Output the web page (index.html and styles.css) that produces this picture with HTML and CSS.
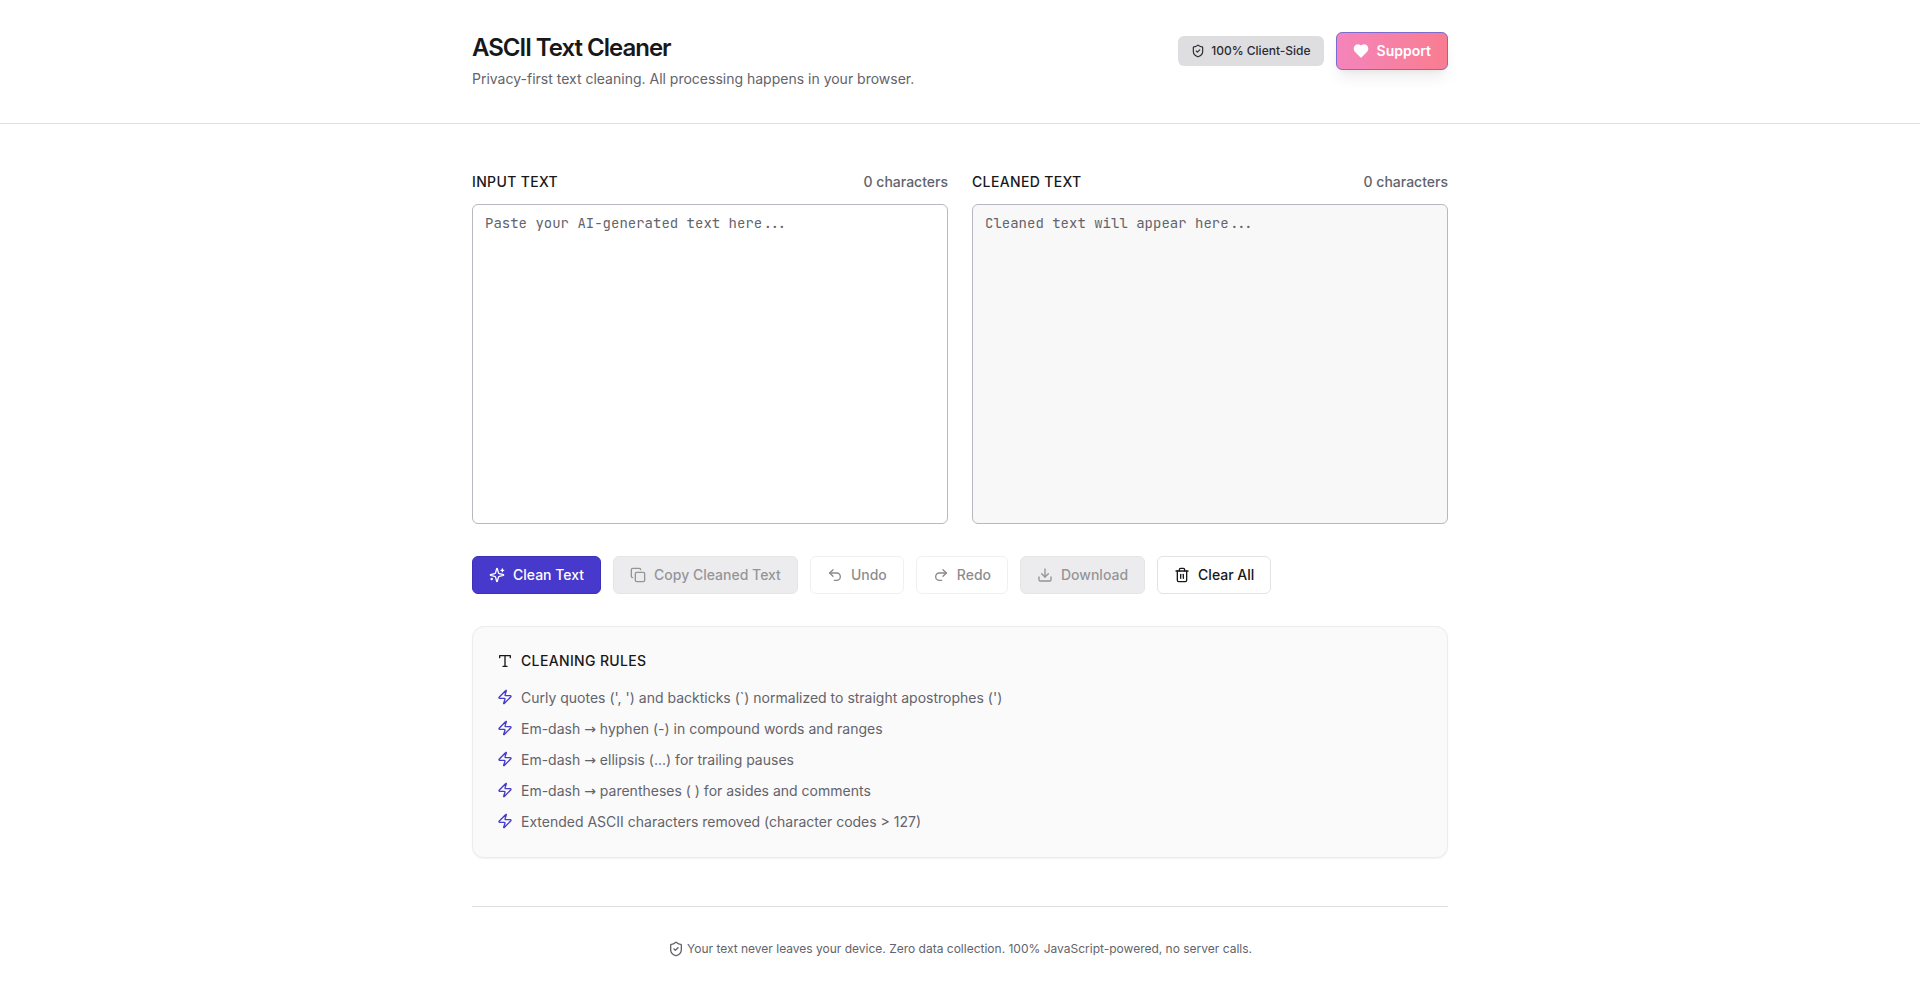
FILE: index.html
```html
<!DOCTYPE html>
<html lang="en">
<head>
    <meta charset="UTF-8">
    <meta name="viewport" content="width=device-width, initial-scale=1.0">
    <title>ASCII Text Cleaner</title>
    <link rel="stylesheet" href="styles.css">
</head>
<body>
    <!-- Shared icons -->
    <svg class="sprite" aria-hidden="true">
        <symbol id="icon-shield" viewBox="0 0 24 24">
            <path d="M20 13c0 5-3.5 7.5-7.66 8.95a1 1 0 0 1-.67-.01C7.5 20.5 4 18 4 13V6a1 1 0 0 1 1-1c2 0 4.5-1.2 6.24-2.72a1.17 1.17 0 0 1 1.52 0C14.51 3.81 17 5 19 5a1 1 0 0 1 1 1z"/>
            <path d="m9 12 2 2 4-4"/>
        </symbol>
        <symbol id="icon-zap" viewBox="0 0 24 24">
            <path d="M4 14a1 1 0 0 1-.78-1.63l9.9-10.2a.5.5 0 0 1 .86.46l-1.92 6.02A1 1 0 0 0 13 10h7a1 1 0 0 1 .78 1.63l-9.9 10.2a.5.5 0 0 1-.86-.46l1.92-6.02A1 1 0 0 0 11 14z"/>
        </symbol>
    </svg>

    <header class="site-header">
        <div class="container header-row">
            <div>
                <h1>ASCII Text Cleaner</h1>
                <p class="tagline">Privacy-first text cleaning. All processing happens in your browser.</p>
            </div>
            <div class="header-actions">
                <div class="badge">
                    <svg class="icon icon-sm"><use href="#icon-shield"/></svg>
                    100% Client-Side
                </div>
                <a class="btn btn-support" href="#support">
                    <svg class="icon icon-fill" viewBox="0 0 24 24"><path d="M19 14c1.49-1.46 3-3.21 3-5.5A5.5 5.5 0 0 0 16.5 3c-1.76 0-3 .5-4.5 2-1.5-1.5-2.74-2-4.5-2A5.5 5.5 0 0 0 2 8.5c0 2.3 1.5 4.05 3 5.5l7 7Z"/></svg>
                    Support
                </a>
            </div>
        </div>
    </header>

    <main class="container main">
        <div class="editors">
            <div class="editor">
                <div class="editor-head">
                    <label for="input-text">INPUT TEXT</label>
                    <span class="count" id="input-count">0 characters</span>
                </div>
                <textarea id="input-text" placeholder="Paste your AI-generated text here..."></textarea>
            </div>
            <div class="editor">
                <div class="editor-head">
                    <label for="output-text">CLEANED TEXT</label>
                    <span class="count" id="output-count">0 characters</span>
                </div>
                <textarea id="output-text" class="output" placeholder="Cleaned text will appear here..." readonly></textarea>
            </div>
        </div>

        <div class="toolbar">
            <button class="btn btn-primary" type="button">
                <svg class="icon" viewBox="0 0 24 24"><path d="M9.937 15.5A2 2 0 0 0 8.5 14.063l-6.135-1.582a.5.5 0 0 1 0-.962L8.5 9.936A2 2 0 0 0 9.937 8.5l1.582-6.135a.5.5 0 0 1 .963 0L14.063 8.5A2 2 0 0 0 15.5 9.937l6.135 1.581a.5.5 0 0 1 0 .964L15.5 14.063a2 2 0 0 0-1.437 1.437l-1.582 6.135a.5.5 0 0 1-.963 0z"/><path d="M20 3v4"/><path d="M22 5h-4"/><path d="M4 17v2"/><path d="M5 18H3"/></svg>
                Clean Text
            </button>
            <button class="btn btn-secondary" type="button" disabled>
                <svg class="icon" viewBox="0 0 24 24"><rect width="14" height="14" x="8" y="8" rx="2" ry="2"/><path d="M4 16c-1.1 0-2-.9-2-2V4c0-1.1.9-2 2-2h10c1.1 0 2 .9 2 2"/></svg>
                Copy Cleaned Text
            </button>
            <button class="btn btn-outline" type="button" disabled>
                <svg class="icon" viewBox="0 0 24 24"><path d="M9 14 4 9l5-5"/><path d="M4 9h10.5a5.5 5.5 0 0 1 5.5 5.5a5.5 5.5 0 0 1-5.5 5.5H11"/></svg>
                Undo
            </button>
            <button class="btn btn-outline" type="button" disabled>
                <svg class="icon" viewBox="0 0 24 24"><path d="m15 14 5-5-5-5"/><path d="M20 9H9.5A5.5 5.5 0 0 0 4 14.5A5.5 5.5 0 0 0 9.5 20H13"/></svg>
                Redo
            </button>
            <button class="btn btn-secondary" type="button" disabled>
                <svg class="icon" viewBox="0 0 24 24"><path d="M21 15v4a2 2 0 0 1-2 2H5a2 2 0 0 1-2-2v-4"/><path d="m7 10 5 5 5-5"/><path d="M12 15V3"/></svg>
                Download
            </button>
            <button class="btn btn-outline" type="button">
                <svg class="icon" viewBox="0 0 24 24"><path d="M3 6h18"/><path d="M19 6v14c0 1-1 2-2 2H7c-1 0-2-1-2-2V6"/><path d="M8 6V4c0-1 1-2 2-2h4c1 0 2 1 2 2v2"/><path d="M10 11v6"/><path d="M14 11v6"/></svg>
                Clear All
            </button>
        </div>

        <section class="rules">
            <h2>
                <svg class="icon" viewBox="0 0 24 24"><path d="M4 7V4h16v3"/><path d="M9 20h6"/><path d="M12 4v16"/></svg>
                CLEANING RULES
            </h2>
            <ul>
                <li><svg class="icon"><use href="#icon-zap"/></svg><span>Curly quotes (', ') and backticks (`) normalized to straight apostrophes (')</span></li>
                <li><svg class="icon"><use href="#icon-zap"/></svg><span>Em-dash <span class="arrow">→</span> hyphen (-) in compound words and ranges</span></li>
                <li><svg class="icon"><use href="#icon-zap"/></svg><span>Em-dash <span class="arrow">→</span> ellipsis (...) for trailing pauses</span></li>
                <li><svg class="icon"><use href="#icon-zap"/></svg><span>Em-dash <span class="arrow">→</span> parentheses ( ) for asides and comments</span></li>
                <li><svg class="icon"><use href="#icon-zap"/></svg><span>Extended ASCII characters removed (character codes &gt; 127)</span></li>
            </ul>
        </section>

        <footer class="site-footer">
            <svg class="icon"><use href="#icon-shield"/></svg>
            <p>Your text never leaves your device. Zero data collection. 100% JavaScript-powered, no server calls.</p>
        </footer>
    </main>
</body>
</html>
```
FILE: styles.css
```css
* {
    box-sizing: border-box;
}

body {
    margin: 0;
    font-family: Inter, "Open Sans", sans-serif;
    font-size: 14px;
    line-height: 20px;
    color: #18181b;
    background-color: #fff;
}

h1, h2, p, ul {
    margin: 0;
    padding: 0;
}

.sprite {
    display: none;
}

.container {
    max-width: 1024px;
    margin: 0 auto;
    padding: 0 24px;
}

.icon {
    width: 16px;
    height: 16px;
    flex-shrink: 0;
    fill: none;
    stroke: currentColor;
    stroke-width: 2;
    stroke-linecap: round;
    stroke-linejoin: round;
}

.icon-sm {
    width: 14px;
    height: 14px;
}

.icon-fill {
    fill: currentColor;
}

/* Header */
.site-header {
    padding: 32px 0 33px;
    border-bottom: 1px solid #e0e0e2;
}

.header-row {
    display: flex;
    justify-content: space-between;
    align-items: flex-start;
    gap: 16px;
}

h1 {
    font-size: 24px;
    line-height: 32px;
    font-weight: 600;
    letter-spacing: -1px;
}

.tagline {
    margin-top: 4px;
    line-height: 22px;
    color: #63636b;
}

.header-actions {
    display: flex;
    align-items: center;
    gap: 12px;
}

.badge {
    display: flex;
    align-items: center;
    gap: 6px;
    padding: 4px 12px;
    border: 1px solid transparent;
    border-radius: 6px;
    font-size: 12px;
    font-weight: 500;
    color: #2b2b30;
    background-color: #dedee1;
}

/* Buttons */
.btn {
    display: inline-flex;
    align-items: center;
    justify-content: center;
    gap: 8px;
    padding: 8px 16px;
    border: 1px solid transparent;
    border-radius: 6px;
    font-family: inherit;
    font-size: 14px;
    line-height: 20px;
    font-weight: 500;
    white-space: nowrap;
    text-decoration: none;
    cursor: pointer;
}

.btn:disabled {
    opacity: 0.5;
    cursor: default;
}

.btn-support {
    font-weight: 600;
    color: #fff;
    border-color: #7c6bd0;
    background: linear-gradient(to right, #f484bb, #f97d90);
    box-shadow: 0 10px 15px -3px rgba(0, 0, 0, 0.08), 0 4px 6px -4px rgba(0, 0, 0, 0.08);
}

.btn-primary {
    color: #fff;
    border-color: #3c30b8;
    background-color: #4639cc;
}

.btn-secondary {
    color: #2b2b30;
    border-color: #cdcdd1;
    background-color: #dbdbdf;
}

.btn-outline {
    color: #18181b;
    border-color: #e3e3e5;
    background-color: #fff;
}

/* Editors */
.main {
    padding-top: 48px;
}

.editors {
    display: grid;
    grid-template-columns: 1fr 1fr;
    gap: 24px;
}

.editor {
    display: flex;
    flex-direction: column;
    gap: 12px;
}

.editor-head {
    display: flex;
    justify-content: space-between;
    font-weight: 500;
}

.editor-head label {
    letter-spacing: 0.025em;
}

.count {
    color: #63636b;
}

textarea {
    display: block;
    width: 100%;
    height: 320px;
    padding: 8px 12px;
    border: 1px solid #b8b8be;
    border-radius: 6px;
    font-family: "JetBrains Mono", "DejaVu Sans Mono", monospace;
    font-size: 14px;
    line-height: 20px;
    color: #18181b;
    background-color: #fff;
    resize: none;
}

textarea::placeholder {
    color: #63636b;
}

.output {
    background-color: #f8f8f8;
}

.toolbar {
    display: flex;
    flex-wrap: wrap;
    gap: 12px;
    margin-top: 32px;
}

/* Rules card */
.rules {
    margin-top: 32px;
    padding: 24px;
    border: 1px solid #ececed;
    border-radius: 12px;
    background-color: #fafafa;
    box-shadow: 0 1px 2px rgba(0, 0, 0, 0.06);
}

.rules h2 {
    display: flex;
    align-items: center;
    gap: 8px;
    margin-bottom: 16px;
    font-size: 14px;
    line-height: 20px;
    font-weight: 500;
    letter-spacing: 0.025em;
}

.rules ul {
    display: grid;
    gap: 9px;
    list-style: none;
}

.rules li {
    display: flex;
    gap: 8px;
    line-height: 22px;
    color: #63636b;
}

.rules li .icon {
    margin-top: 2px;
    color: #4639cc;
}

.arrow {
    font-family: "DejaVu Sans", sans-serif;
}

/* Footer */
.site-footer {
    display: flex;
    align-items: center;
    justify-content: center;
    gap: 3px;
    margin-top: 48px;
    padding: 32px 0;
    border-top: 1px solid #e0e0e2;
    font-size: 12px;
    color: #63636b;
}
```
